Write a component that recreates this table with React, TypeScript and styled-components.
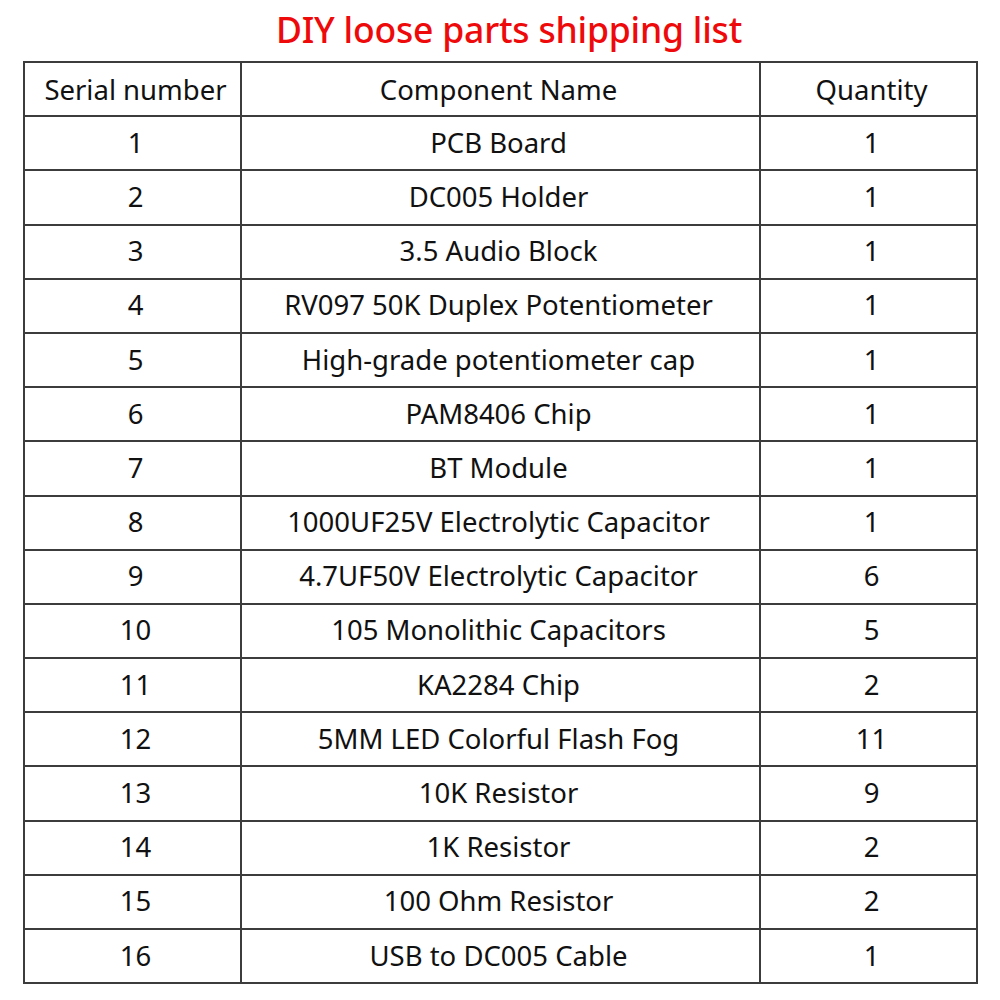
import React from "react";
import styled, { createGlobalStyle } from "styled-components";

const GlobalStyle = createGlobalStyle`
  html, body {
    margin: 0;
    padding: 0;
    background: #ffffff;
  }
  body {
    font-family: "Noto Sans", "Open Sans", sans-serif;
    color: #111111;
  }
`;

const Page = styled.div`
  width: 1000px;
  height: 1000px;
  display: flex;
  flex-direction: column;
  align-items: center;
  overflow: hidden;
`;

const Title = styled.h1`
  margin: 0;
  height: 61px;
  display: flex;
  align-items: center;
  justify-content: center;
  font-family: "Noto Sans", sans-serif;
  font-weight: 500;
  font-size: 35.5px;
  color: #ee0a0a;
  letter-spacing: -0.2px;
  padding: 0 0 4px 18px;
  box-sizing: border-box;
`;

const Grid = styled.div`
  width: 955px;
  display: grid;
  grid-template-columns: 217px 519px 1fr;
  grid-auto-rows: 54.2px;
  border-top: 2px solid #3c3c3c;
  border-left: 2px solid #3c3c3c;
  box-sizing: border-box;
  margin-left: 1px;
`;

const Cell = styled.div<{ $header?: boolean; $side?: boolean }>`
  display: flex;
  align-items: center;
  justify-content: center;
  border-right: 2px solid #3c3c3c;
  border-bottom: 2px solid #3c3c3c;
  font-size: 27.5px;
  font-weight: 400;
  color: #111111;
  white-space: nowrap;
  padding: ${(p) => (p.$header ? "0 0 0" : "0 0 2px")};
  padding-left: ${(p) => (p.$side ? "6px" : "0")};
  padding-right: ${(p) => (p.$side ? "0" : "4px")};
  box-sizing: border-box;
`;

const rows: [string, string, string][] = [
  ["1", "PCB Board", "1"],
  ["2", "DC005 Holder", "1"],
  ["3", "3.5 Audio Block", "1"],
  ["4", "RV097 50K Duplex Potentiometer", "1"],
  ["5", "High-grade potentiometer cap", "1"],
  ["6", "PAM8406 Chip", "1"],
  ["7", "BT Module", "1"],
  ["8", "1000UF25V Electrolytic Capacitor", "1"],
  ["9", "4.7UF50V Electrolytic Capacitor", "6"],
  ["10", "105 Monolithic Capacitors", "5"],
  ["11", "KA2284 Chip", "2"],
  ["12", "5MM LED Colorful Flash Fog", "11"],
  ["13", "10K Resistor", "9"],
  ["14", "1K Resistor", "2"],
  ["15", "100 Ohm Resistor", "2"],
  ["16", "USB to DC005 Cable", "1"],
];

export default function App() {
  return (
    <>
      <GlobalStyle />
      <Page>
        <Title>DIY loose parts shipping list</Title>
        <Grid>
          <Cell $header $side>Serial number</Cell>
          <Cell $header>Component Name</Cell>
          <Cell $header $side>Quantity</Cell>
          {rows.map(([n, name, q]) => (
            <React.Fragment key={n}>
              <Cell $side>{n}</Cell>
              <Cell>{name}</Cell>
              <Cell $side>{q}</Cell>
            </React.Fragment>
          ))}
        </Grid>
      </Page>
    </>
  );
}
